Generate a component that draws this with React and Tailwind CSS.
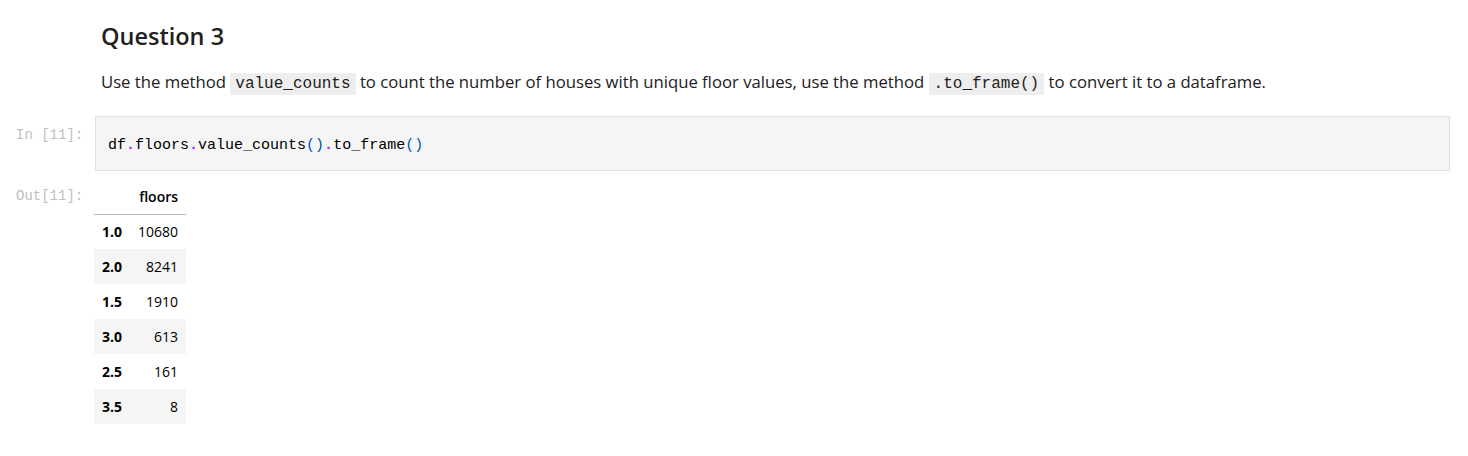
const mono = "font-['Liberation_Mono','DejaVu_Sans_Mono',monospace]";

const rows = [
  ["1.0", "10680"],
  ["2.0", "8241"],
  ["1.5", "1910"],
  ["3.0", "613"],
  ["2.5", "161"],
  ["3.5", "8"],
];

const Dot = () => <span className="text-[#aa22ff] font-bold">.</span>;
const Paren = () => <span className="text-[#0055aa]">()</span>;

export default function App() {
  return (
    <div className="w-[1468px] h-[456px] bg-white text-[#212121] font-['Open_Sans',sans-serif]">
      {/* markdown cell */}
      <div className="flex pt-[20px]">
        <div className="w-[95px] shrink-0" />
        <div className="pl-[6px]">
          <h2 className="text-[23.5px] font-semibold leading-[32px]">Question 3</h2>
          <p className="mt-[19px] text-[16.7px] leading-[22px]">
            Use the method{" "}
            <code className={`${mono} bg-[#eeeeee] px-[5px] py-[2px] text-[16px]`}>value_counts</code>{" "}
            to count the number of houses with unique floor values, use the method{" "}
            <code className={`${mono} bg-[#eeeeee] px-[5px] py-[2px] text-[16px]`}>.to_frame()</code>{" "}
            to convert it to a dataframe.
          </p>
        </div>
      </div>

      {/* code cell */}
      <div className="flex mt-[21px] pr-[18px]">
        <div className={`w-[95px] shrink-0 pl-[16px] pt-[9px] text-[14px] text-[#c0c0c0] ${mono}`}>In [11]:</div>
        <div className="flex-1 h-[55px] border border-[#e0e0e0] bg-[#f5f5f5] flex items-center pl-[12px]">
          <pre className={`${mono} text-[15px] text-black pt-[6px]`}>
            df<Dot />floors<Dot />value_counts<Paren /><Dot />to_frame<Paren />
          </pre>
        </div>
      </div>

      {/* output */}
      <div className="flex mt-[13px]">
        <div className={`w-[94px] shrink-0 pl-[16px] pt-[2px] text-[14px] text-[#c0c0c0] ${mono}`}>Out[11]:</div>
        <table className="text-[14px] border-collapse">
          <thead>
            <tr className="border-b border-[#bdbdbd]">
              <th className="h-[30px] px-[8px] align-top pt-[2px]"></th>
              <th className="h-[30px] px-[8px] text-right align-top pt-[2px] font-semibold text-black">floors</th>
            </tr>
          </thead>
          <tbody>
            {rows.map(([idx, val], i) => (
              <tr key={idx} className={i % 2 === 1 ? "bg-[#f5f5f5]" : "bg-white"}>
                <td className="h-[35px] pl-[8px] pr-[8px] font-bold text-black">{idx}</td>
                <td className="h-[35px] pl-[8px] pr-[8px] text-right text-black">{val}</td>
              </tr>
            ))}
          </tbody>
        </table>
      </div>
    </div>
  );
}
